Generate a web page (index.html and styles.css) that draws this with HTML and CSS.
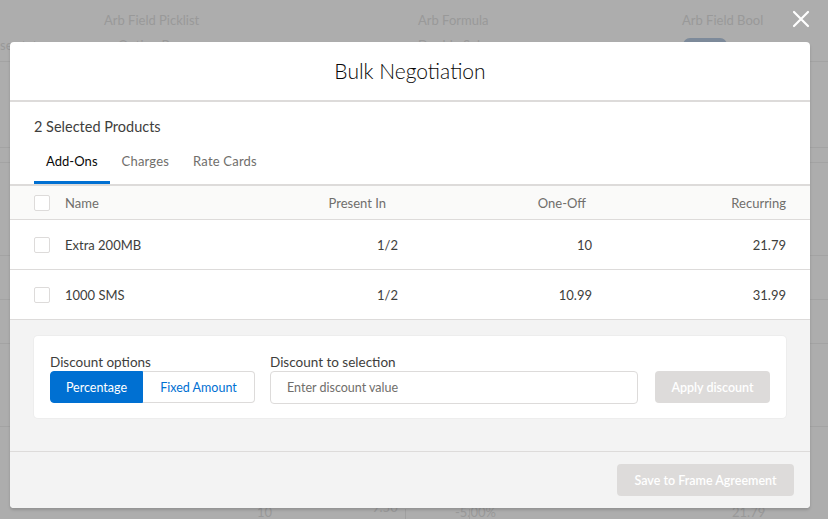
FILE: index.html
```html
<!DOCTYPE html>
<html>
<head>
<meta charset="utf-8">
<link rel="stylesheet" href="styles.css">
</head>
<body>
<div class="backdrop">
  <span class="bg-text t1">Arb Field Picklist</span>
  <span class="bg-text t2">Arb Formula</span>
  <span class="bg-text t3">Arb Field Bool</span>
  <span class="bg-text t4">se status</span>
  <span class="bg-text t5">Option B</span>
  <span class="bg-text t6">Double Sub</span>
  <span class="bg-toggle"></span>
  <span class="bg-text low t7">10</span>
  <span class="bg-text t8">9.50</span>
  <span class="bg-text low t9">-5.00%</span>
  <span class="bg-text low t10">21.79</span>
  <span class="bg-vline v1"></span>
  <span class="bg-vline v2"></span>
  <span class="bg-hline h1"></span>
  <span class="bg-hline h2"></span>
  <span class="bg-hline h3"></span>
  <span class="bg-hline h4"></span>
  <span class="bg-hline h5"></span>
  <span class="bg-hline h6"></span>
  <span class="bg-hline h7"></span>
</div>

<button class="close" aria-label="Close">
  <svg width="18" height="18" viewBox="0 0 18 18"><path d="M2 2 L16 16 M16 2 L2 16" stroke="#fff" stroke-width="2.2" stroke-linecap="round"/></svg>
</button>

<div class="modal">
  <header class="modal-header">
    <h2 class="modal-title">Bulk Negotiation</h2>
  </header>
  <div class="modal-top">
    <div class="selected">2 Selected Products</div>
    <nav class="tabs">
      <span class="tab active">Add-Ons</span>
      <span class="tab">Charges</span>
      <span class="tab">Rate Cards</span>
    </nav>
  </div>
  <div class="table">
    <div class="row head">
      <span class="cell"><span class="checkbox"></span></span>
      <span class="cell">Name</span>
      <span class="cell num pad12">Present In</span>
      <span class="cell num pad6">One-Off</span>
      <span class="cell num">Recurring</span>
    </div>
    <div class="row">
      <span class="cell"><span class="checkbox"></span></span>
      <span class="cell">Extra 200MB</span>
      <span class="cell num">1/2</span>
      <span class="cell num">10</span>
      <span class="cell num">21.79</span>
    </div>
    <div class="row">
      <span class="cell"><span class="checkbox"></span></span>
      <span class="cell">1000 SMS</span>
      <span class="cell num">1/2</span>
      <span class="cell num">10.99</span>
      <span class="cell num">31.99</span>
    </div>
  </div>
  <div class="discount-area">
    <div class="card">
      <div class="field">
        <label class="label">Discount options</label>
        <div class="btn-group">
          <button class="seg active">Percentage</button>
          <button class="seg">Fixed Amount</button>
        </div>
      </div>
      <div class="field grow">
        <label class="label">Discount to selection</label>
        <input class="input" type="text" placeholder="Enter discount value">
      </div>
      <button class="btn-disabled apply">Apply discount</button>
    </div>
  </div>
  <footer class="modal-footer">
    <button class="btn-disabled save">Save to Frame Agreement</button>
  </footer>
</div>
</body>
</html>
```
FILE: styles.css
```css
* { box-sizing: border-box; }
html, body { margin: 0; padding: 0; }
body {
  width: 828px;
  height: 519px;
  overflow: hidden;
  background: #adadad;
  font-family: "Lato", "Open Sans", sans-serif;
  font-size: 13px;
  color: #3e3e3c;
  position: relative;
}
.backdrop { position: absolute; inset: 0; }
.bg-text { position: absolute; color: #999; font-size: 13px; line-height: 16px; white-space: nowrap; }
.bg-text.low { line-height: 13px; }
.t1 { left: 104px; top: 12px; }
.t2 { left: 418px; top: 12px; }
.t3 { left: 682px; top: 12px; }
.t4 { left: 0; top: 37px; }
.t5 { left: 118px; top: 37px; }
.t6 { left: 418px; top: 37px; }
.t7 { left: 257px; top: 506px; }
.t8 { left: 372px; top: 499px; }
.t9 { left: 455px; top: 506px; }
.t10 { left: 732px; top: 506px; }
.bg-toggle { position: absolute; left: 683px; top: 38px; width: 44px; height: 14px; border-radius: 8px; background: #7d8a9a; }
.bg-vline { position: absolute; width: 1px; background: #a0a0a0; top: 509px; height: 10px; }
.v1 { left: 405px; }
.v2 { left: 469px; }
.bg-hline { position: absolute; height: 1px; left: 0; right: 0; background: #a3a3a3; }
.h1 { top: 61px; }
.h2 { top: 147px; }
.h3 { top: 162px; }
.h4 { top: 255px; }
.h5 { top: 299px; }
.h6 { top: 343px; }
.h7 { top: 426px; }

.close {
  position: absolute;
  left: 792px;
  top: 10px;
  width: 18px;
  height: 18px;
  padding: 0;
  border: 0;
  background: none;
  display: flex;
}

.modal {
  position: absolute;
  left: 10px;
  top: 42px;
  width: 800px;
  height: 466px;
  background: #fff;
  border-radius: 4px;
  display: flex;
  flex-direction: column;
  overflow: hidden;
  box-shadow: 0 2px 3px rgba(0,0,0,0.16);
}
.modal-header {
  height: 60px;
  border-bottom: 2px solid #dddbda;
  display: flex;
  align-items: center;
  justify-content: center;
  flex: none;
  padding-bottom: 2px;
}
.modal-title {
  margin: 0;
  font-size: 21px;
  font-weight: 300;
  color: #080707;
}
.modal-top { padding: 16px 24px 0; flex: none; }
.selected { font-size: 14.5px; line-height: 18px; color: #3e3e3c; }
.tabs { display: flex; margin-top: 17px; }
.tab {
  padding: 0 12px;
  height: 31px;
  line-height: 17px;
  color: #706e6b;
  font-size: 13px;
  letter-spacing: 0.2px;
}
.tab.active { color: #080707; border-bottom: 3px solid #0070d2; letter-spacing: 0.05px; }

.table { border-top: 2px solid #dddbda; flex: none; }
.row {
  display: grid;
  grid-template-columns: 31px 200px 133px 194px 194px;
  align-items: center;
  padding: 0 24px;
  height: 50px;
  border-bottom: 1px solid #dddbda;
  color: #3e3e3c;
}
.row.head { height: 34px; background: #fafaf9; color: #706e6b; }
.cell { display: flex; align-items: center; white-space: nowrap; }
.num { justify-content: flex-end; }
.pad12 { padding-right: 12px; }
.pad6 { padding-right: 6px; }
.checkbox {
  width: 16px; height: 16px;
  border: 1px solid #dddbda;
  border-radius: 2px;
  background: #fff;
}

.discount-area {
  flex: 1;
  background: #f3f3f3;
  padding: 16px 24px;
  border-bottom: 1px solid #dddbda;
}
.card {
  background: #fff;
  border-radius: 4px;
  box-shadow: 0 0 0 1px #ededed;
  padding: 18px 16px 15px;
  display: flex;
  align-items: flex-end;
  gap: 15px;
}
.field { display: flex; flex-direction: column; }
.field.grow { flex: 1; margin-right: 1px; }
.label { font-size: 13.5px; line-height: 17px; color: #3e3e3c; }
.btn-group { display: flex; height: 32px; }
.seg {
  font-family: inherit;
  font-size: 12.5px;
  height: 32px;
  border: 1px solid #dddbda;
  background: #fff;
  color: #0070d2;
  padding: 0;
}
.seg.active {
  width: 93px;
  background: #0070d2;
  border-color: #0070d2;
  color: #fff;
  border-radius: 4px 0 0 4px;
}
.seg:not(.active) { width: 112px; border-left: 0; border-radius: 0 4px 4px 0; }
.input {
  height: 33px;
  border: 1px solid #dddbda;
  border-radius: 4px;
  padding: 0 16px;
  font-family: inherit;
  font-size: 12.5px;
  margin-bottom: -1px;
}
.input::placeholder { color: #706e6b; }
.btn-disabled {
  font-family: inherit;
  font-size: 12.5px;
  height: 32px;
  border: 0;
  border-radius: 4px;
  background: #dddbda;
  color: #fff;
  font-weight: 600;
}
.apply { width: 115px; margin-left: 1px; }
.modal-footer {
  height: 56px;
  background: #f3f3f3;
  padding: 12px 16px;
  display: flex;
  justify-content: flex-end;
  flex: none;
}
.save { width: 177px; }
```
